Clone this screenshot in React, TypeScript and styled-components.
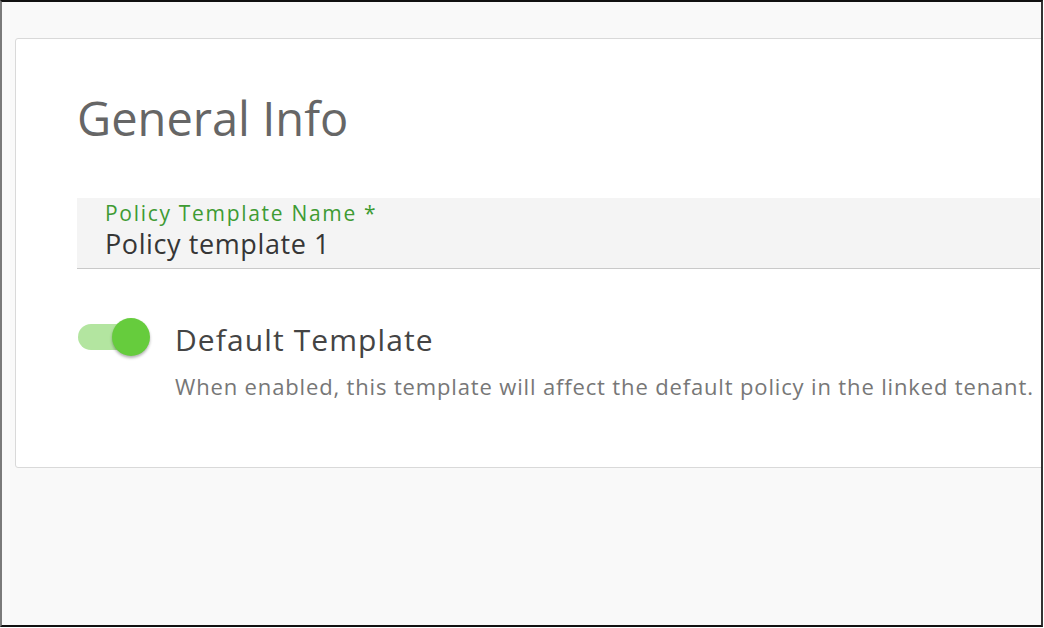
import React from "react";
import styled, { createGlobalStyle } from "styled-components";

const GlobalStyle = createGlobalStyle`
  html, body {
    margin: 0;
    padding: 0;
    background: #ffffff;
  }
  body {
    font-family: "Open Sans", "Noto Sans", sans-serif;
  }
`;

const Frame = styled.div`
  box-sizing: border-box;
  width: 1043px;
  height: 627px;
  background: #f9f9f9;
  border-top: 2px solid #111111;
  border-left: 2px solid #7a7a7a;
  border-right: 2px solid #333333;
  border-bottom: 2px solid #111111;
  overflow: hidden;
  padding: 36px 0 0 13px;
`;

const Card = styled.section`
  box-sizing: border-box;
  margin-right: -60px;
  background: #ffffff;
  border: 1px solid #d9d9d9;
  border-radius: 3px;
  padding: 56px 60px 66px 61px;
`;

const Title = styled.h1`
  margin: 0;
  font-size: 47px;
  line-height: 47px;
  font-weight: 400;
  color: #666666;
`;

const Field = styled.div`
  margin-top: 56px;
  background: #f4f4f4;
  border-bottom: 1px solid #c9c9c9;
  padding: 3px 28px 9px;
  display: flex;
  flex-direction: column;
`;

const Label = styled.label`
  font-size: 21px;
  line-height: 24px;
  letter-spacing: 1.7px;
  color: #3e9b33;
`;

const Value = styled.div`
  margin-top: 4px;
  font-size: 27px;
  line-height: 30px;
  letter-spacing: 0.6px;
  color: #363636;
`;

const ToggleRow = styled.div`
  margin-top: 48px;
  display: flex;
  align-items: flex-start;
  gap: 24px;
`;

const Switch = styled.div`
  position: relative;
  flex: none;
  width: 73px;
  height: 42px;
  margin-left: 1px;
`;

const Track = styled.span<{ $on: boolean }>`
  position: absolute;
  left: 0;
  top: 7px;
  width: 62px;
  height: 26px;
  border-radius: 13px;
  background: ${(p) => (p.$on ? "#b3e5a0" : "#cccccc")};
`;

const Thumb = styled.span<{ $on: boolean }>`
  position: absolute;
  top: 1px;
  left: ${(p) => (p.$on ? "34px" : "0")};
  width: 38px;
  height: 38px;
  border-radius: 50%;
  background: ${(p) => (p.$on ? "#66cc3d" : "#f1f1f1")};
  box-shadow: 0 2px 3px rgba(0, 0, 0, 0.3);
`;

const TextCol = styled.div`
  display: flex;
  flex-direction: column;
  padding-top: 5px;
`;

const OptionTitle = styled.div`
  font-size: 30px;
  line-height: 36px;
  letter-spacing: 1.1px;
  color: #444444;
`;

const OptionHint = styled.div`
  margin-top: 13px;
  font-size: 22px;
  line-height: 30px;
  letter-spacing: 0.85px;
  color: #777777;
  white-space: nowrap;
`;

export default function App() {
  const isDefault = true;
  return (
    <>
      <GlobalStyle />
      <Frame>
        <Card>
          <Title>General Info</Title>
          <Field>
            <Label>Policy Template Name *</Label>
            <Value>Policy template 1</Value>
          </Field>
          <ToggleRow>
            <Switch role="switch" aria-checked={isDefault}>
              <Track $on={isDefault} />
              <Thumb $on={isDefault} />
            </Switch>
            <TextCol>
              <OptionTitle>Default Template</OptionTitle>
              <OptionHint>
                When enabled, this template will affect the default policy in the linked tenant.
              </OptionHint>
            </TextCol>
          </ToggleRow>
        </Card>
      </Frame>
    </>
  );
}
